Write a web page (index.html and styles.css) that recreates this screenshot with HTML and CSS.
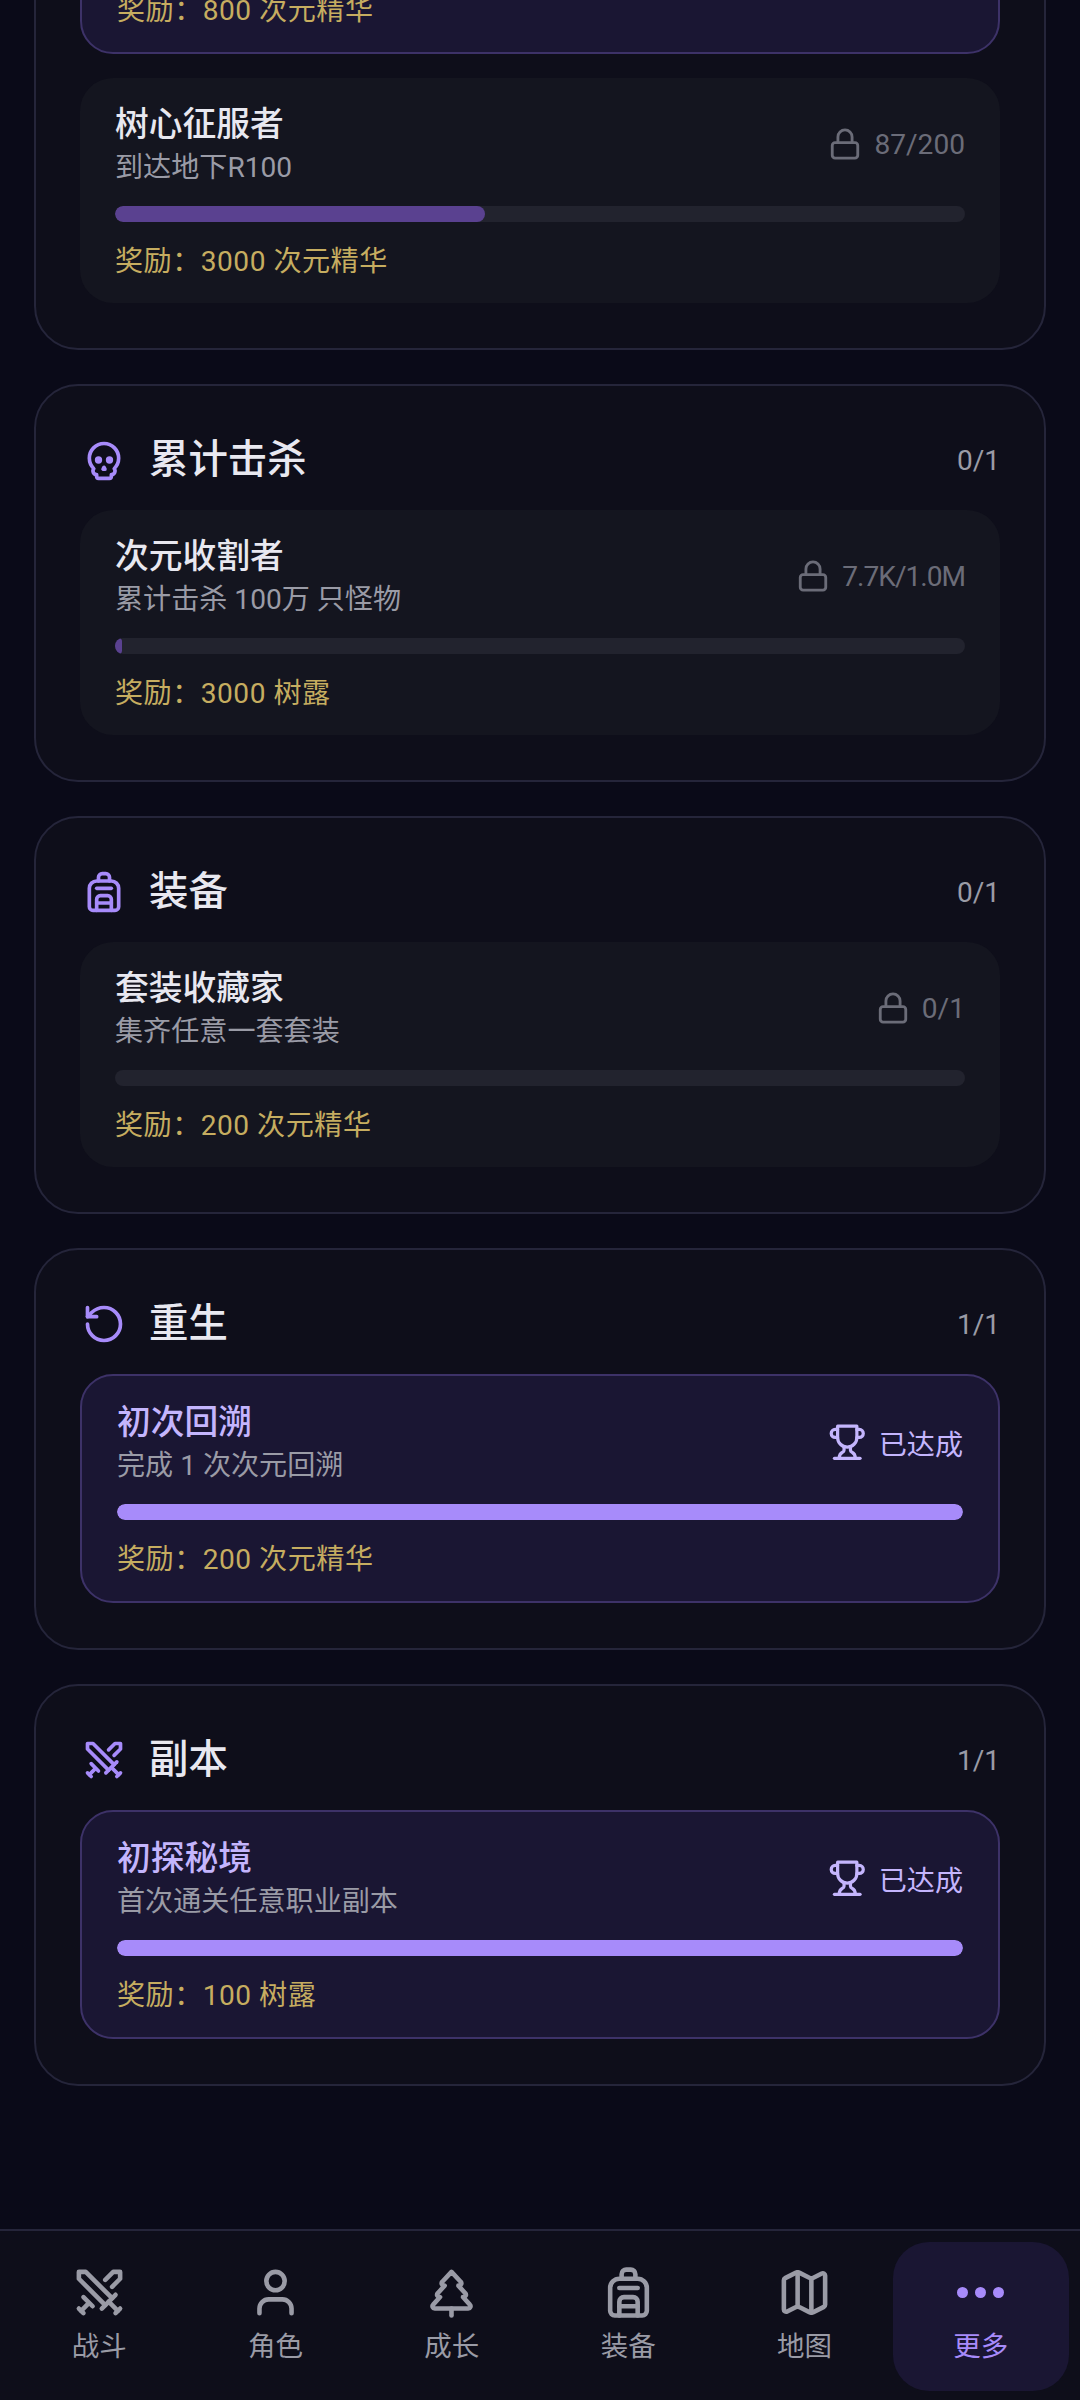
FILE: index.html
```html
<!DOCTYPE html>
<html lang="zh-CN">
<head>
  <meta charset="UTF-8">
  <meta name="viewport" content="width=device-width, initial-scale=1.0">
  <title>成就</title>
  <link rel="stylesheet" href="styles.css">
</head>
<body>
  <svg class="sprite" xmlns="http://www.w3.org/2000/svg">
    <symbol id="i-swords" viewBox="0 0 24 24">
      <polyline points="14.5 17.5 3 6 3 3 6 3 17.5 14.5"></polyline>
      <line x1="13" y1="19" x2="19" y2="13"></line>
      <line x1="16" y1="16" x2="20" y2="20"></line>
      <line x1="19" y1="21" x2="21" y2="19"></line>
      <polyline points="14.5 6.5 18 3 21 3 21 6 17.5 9.5"></polyline>
      <line x1="5" y1="14" x2="9" y2="18"></line>
      <line x1="7" y1="17" x2="4" y2="20"></line>
      <line x1="3" y1="19" x2="5" y2="21"></line>
    </symbol>
    <symbol id="i-user" viewBox="0 0 24 24">
      <path d="M19 21v-2a4 4 0 0 0-4-4H9a4 4 0 0 0-4 4v2"></path>
      <circle cx="12" cy="7" r="4"></circle>
    </symbol>
    <symbol id="i-tree" viewBox="0 0 24 24">
      <path d="m17 14 3 3.3a1 1 0 0 1-.7 1.7H4.7a1 1 0 0 1-.7-1.7L7 14h-.3a1 1 0 0 1-.7-1.7L9 9h-.2A1 1 0 0 1 8 7.3L12 3l4 4.3a1 1 0 0 1-.8 1.7H15l3 3.3a1 1 0 0 1-.7 1.7H17Z"></path>
      <path d="M12 22v-3"></path>
    </symbol>
    <symbol id="i-backpack" viewBox="0 0 24 24">
      <path d="M4 10a4 4 0 0 1 4-4h8a4 4 0 0 1 4 4v10a2 2 0 0 1-2 2H6a2 2 0 0 1-2-2z"></path>
      <path d="M8 10h8"></path>
      <path d="M8 18h8"></path>
      <path d="M8 22v-6a2 2 0 0 1 2-2h4a2 2 0 0 1 2 2v6"></path>
      <path d="M9 6V4a2 2 0 0 1 2-2h2a2 2 0 0 1 2 2v2"></path>
    </symbol>
    <symbol id="i-map" viewBox="0 0 24 24">
      <path d="M14.106 5.553a2 2 0 0 0 1.788 0l3.659-1.83A1 1 0 0 1 21 4.619v12.764a1 1 0 0 1-.553.894l-4.553 2.277a2 2 0 0 1-1.788 0l-4.212-2.106a2 2 0 0 0-1.788 0l-3.659 1.83A1 1 0 0 1 3 19.381V6.618a1 1 0 0 1 .553-.894l4.553-2.277a2 2 0 0 1 1.788 0z"></path>
      <path d="M15 5.764v15"></path>
      <path d="M9 3.236v15"></path>
    </symbol>
    <symbol id="i-skull" viewBox="0 0 24 24">
      <path d="m12.5 17-.5-1-.5 1h1z"></path>
      <path d="M15 22a1 1 0 0 0 1-1v-1a2 2 0 0 0 1.56-3.25 8 8 0 1 0-11.12 0A2 2 0 0 0 8 20v1a1 1 0 0 0 1 1z"></path>
      <circle cx="15" cy="12" r="1"></circle>
      <circle cx="9" cy="12" r="1"></circle>
    </symbol>
    <symbol id="i-rotate" viewBox="0 0 24 24">
      <path d="M3 12a9 9 0 1 0 9-9 9.75 9.75 0 0 0-6.74 2.74L3 8"></path>
      <path d="M3 3v5h5"></path>
    </symbol>
    <symbol id="i-trophy" viewBox="0 0 24 24">
      <path d="M6 9H4.5a2.5 2.5 0 0 1 0-5H6"></path>
      <path d="M18 9h1.5a2.5 2.5 0 0 0 0-5H18"></path>
      <path d="M4 22h16"></path>
      <path d="M10 14.66V17c0 .55-.47.98-.97 1.21C7.85 18.75 7 20.24 7 22"></path>
      <path d="M14 14.66V17c0 .55.47.98.97 1.21C16.15 18.75 17 20.24 17 22"></path>
      <path d="M18 2H6v7a6 6 0 0 0 12 0V2Z"></path>
    </symbol>
    <symbol id="i-lock" viewBox="0 0 24 24">
      <rect x="3" y="11" width="18" height="11" rx="2" ry="2"></rect>
      <path d="M7 11V7a5 5 0 0 1 10 0v4"></path>
    </symbol>
  </svg>

  <div class="app">
    <main class="scroll-area">
      <div class="section-list">

        <section class="section">
          <div class="item item-done">
            <div class="item-reward">奖励：800 次元精华</div>
          </div>
          <div class="item">
            <div class="item-top">
              <div>
                <div class="item-title">树心征服者</div>
                <div class="item-desc">到达地下R100</div>
              </div>
              <div class="item-status">
                <svg class="icon-status"><use href="#i-lock"></use></svg>
                <span>87/200</span>
              </div>
            </div>
            <div class="progress"><div class="progress-fill" style="width: 43.5%"></div></div>
            <div class="item-reward">奖励：3000 次元精华</div>
          </div>
        </section>

        <section class="section">
          <div class="section-header">
            <svg class="icon-section"><use href="#i-skull"></use></svg>
            <h2 class="section-title">累计击杀</h2>
            <span class="section-count">0/1</span>
          </div>
          <div class="item">
            <div class="item-top">
              <div>
                <div class="item-title">次元收割者</div>
                <div class="item-desc">累计击杀 100万 只怪物</div>
              </div>
              <div class="item-status">
                <svg class="icon-status"><use href="#i-lock"></use></svg>
                <span class="status-tight">7.7K/1.0M</span>
              </div>
            </div>
            <div class="progress"><div class="progress-fill" style="width: 0.8%"></div></div>
            <div class="item-reward">奖励：3000 树露</div>
          </div>
        </section>

        <section class="section">
          <div class="section-header">
            <svg class="icon-section"><use href="#i-backpack"></use></svg>
            <h2 class="section-title">装备</h2>
            <span class="section-count">0/1</span>
          </div>
          <div class="item">
            <div class="item-top">
              <div>
                <div class="item-title">套装收藏家</div>
                <div class="item-desc">集齐任意一套套装</div>
              </div>
              <div class="item-status">
                <svg class="icon-status"><use href="#i-lock"></use></svg>
                <span>0/1</span>
              </div>
            </div>
            <div class="progress"></div>
            <div class="item-reward">奖励：200 次元精华</div>
          </div>
        </section>

        <section class="section">
          <div class="section-header">
            <svg class="icon-section"><use href="#i-rotate"></use></svg>
            <h2 class="section-title">重生</h2>
            <span class="section-count">1/1</span>
          </div>
          <div class="item item-done">
            <div class="item-top">
              <div>
                <div class="item-title">初次回溯</div>
                <div class="item-desc">完成 1 次次元回溯</div>
              </div>
              <div class="item-status">
                <svg class="icon-trophy"><use href="#i-trophy"></use></svg>
                <span>已达成</span>
              </div>
            </div>
            <div class="progress"><div class="progress-fill" style="width: 100%"></div></div>
            <div class="item-reward">奖励：200 次元精华</div>
          </div>
        </section>

        <section class="section">
          <div class="section-header">
            <svg class="icon-section"><use href="#i-swords"></use></svg>
            <h2 class="section-title">副本</h2>
            <span class="section-count">1/1</span>
          </div>
          <div class="item item-done">
            <div class="item-top">
              <div>
                <div class="item-title">初探秘境</div>
                <div class="item-desc">首次通关任意职业副本</div>
              </div>
              <div class="item-status">
                <svg class="icon-trophy"><use href="#i-trophy"></use></svg>
                <span>已达成</span>
              </div>
            </div>
            <div class="progress"><div class="progress-fill" style="width: 100%"></div></div>
            <div class="item-reward">奖励：100 树露</div>
          </div>
        </section>

      </div>
    </main>

    <nav class="bottom-nav">
      <a class="nav-item"><svg class="icon-nav"><use href="#i-swords"></use></svg><span>战斗</span></a>
      <a class="nav-item"><svg class="icon-nav"><use href="#i-user"></use></svg><span>角色</span></a>
      <a class="nav-item"><svg class="icon-nav"><use href="#i-tree"></use></svg><span>成长</span></a>
      <a class="nav-item"><svg class="icon-nav"><use href="#i-backpack"></use></svg><span>装备</span></a>
      <a class="nav-item"><svg class="icon-nav"><use href="#i-map"></use></svg><span>地图</span></a>
      <a class="nav-item active">
        <span class="nav-dots"><i></i><i></i><i></i></span>
        <span>更多</span>
      </a>
    </nav>
  </div>
</body>
</html>
```

FILE: styles.css
```css
:root {
  --bg: #0a0a18;
  --section: #0e0e1a;
  --line: #25253a;
  --item: #14151f;
  --track: #22232e;
  --done: #1a1633;
  --done-line: #3d3268;
  --purple: #a78bfa;
  --purple-light: #c4b5fd;
  --purple-dim: #5a4190;
  --text: #e8e8f0;
  --gray: #9a9ba6;
  --gray-dark: #6b6c78;
  --gold: #c6ad60;
}

* {
  margin: 0;
  padding: 0;
  box-sizing: border-box;
}

body {
  font-family: 'Roboto', 'Noto Sans CJK SC', sans-serif;
  background-color: var(--bg);
  color: var(--text);
  overflow: hidden;
}

.sprite {
  display: none;
}

svg {
  fill: none;
  stroke: currentColor;
  stroke-width: 2;
  stroke-linecap: round;
  stroke-linejoin: round;
  flex-shrink: 0;
}

.app {
  height: 100vh;
  display: flex;
  flex-direction: column;
}

.scroll-area {
  flex: 1;
  min-height: 0;
  overflow: hidden;
  padding: 0 34px;
}

/* list is scrolled, first section starts above the screen */
.section-list {
  margin-top: -82px;
  display: flex;
  flex-direction: column;
  gap: 34px;
}

.section {
  background-color: var(--section);
  border: 2px solid var(--line);
  border-radius: 44px;
  padding: 45px 44px 45px;
  display: flex;
  flex-direction: column;
  gap: 24px;
}

.section-header {
  display: flex;
  align-items: center;
  height: 58px;
  margin-bottom: -3px;
}

.icon-section {
  width: 44px;
  height: 44px;
  color: var(--purple);
  margin: 0 23px 0 2px;
}

.section-title {
  flex: 1;
  font-size: 39.4px;
  font-weight: 500;
  line-height: 58px;
}

.section-count {
  font-size: 28px;
  color: var(--gray);
}

.item {
  background-color: var(--item);
  border-radius: 33px;
  padding: 24.5px 35px 22.5px;
}

.item-done {
  background-color: var(--done);
  border: 2px solid var(--done-line);
}

.item-top {
  display: flex;
  align-items: center;
  justify-content: space-between;
}

.item-title {
  font-size: 33.75px;
  font-weight: 500;
  line-height: 44px;
}

.item-done .item-title {
  color: var(--purple-light);
}

.item-desc {
  font-size: 28.1px;
  line-height: 36px;
  margin-top: 3px;
  color: var(--gray);
}

.item-status {
  display: flex;
  align-items: center;
  gap: 12px;
  font-size: 28.1px;
  color: var(--gray-dark);
}

.item-done .item-status {
  color: var(--purple-light);
}

.status-tight {
  letter-spacing: -1px;
}

.icon-status {
  width: 34px;
  height: 34px;
}

.icon-trophy {
  width: 38.5px;
  height: 38.5px;
}

.progress {
  height: 16px;
  margin-top: 20px;
  border-radius: 8px;
  background-color: var(--track);
  overflow: hidden;
}

.progress-fill {
  height: 100%;
  border-radius: 8px;
  background-color: var(--purple-dim);
}

.item-done .progress-fill {
  background-color: var(--purple);
}

.item-reward {
  font-size: 28.1px;
  letter-spacing: 0.5px;
  line-height: 38px;
  margin-top: 21px;
  color: var(--gold);
}

.section > .item-done:first-child .item-reward {
  margin-top: 0;
}

.bottom-nav {
  flex-shrink: 0;
  height: 171px;
  background-color: var(--section);
  border-top: 2px solid var(--line);
  padding: 11px 11px 9px;
  display: grid;
  grid-template-columns: repeat(6, 1fr);
}

.nav-item {
  display: flex;
  flex-direction: column;
  align-items: center;
  padding-top: 23px;
  gap: 9px;
  border-radius: 36px;
  font-size: 27.5px;
  line-height: 36px;
  color: var(--gray);
}

.nav-item.active {
  background-color: var(--done);
  color: var(--purple);
}

.icon-nav {
  width: 55px;
  height: 55px;
}

.nav-dots {
  height: 55px;
  display: flex;
  align-items: center;
  gap: 7px;
}

.nav-dots i {
  width: 11px;
  height: 11px;
  border-radius: 50%;
  background-color: var(--purple);
}
```
